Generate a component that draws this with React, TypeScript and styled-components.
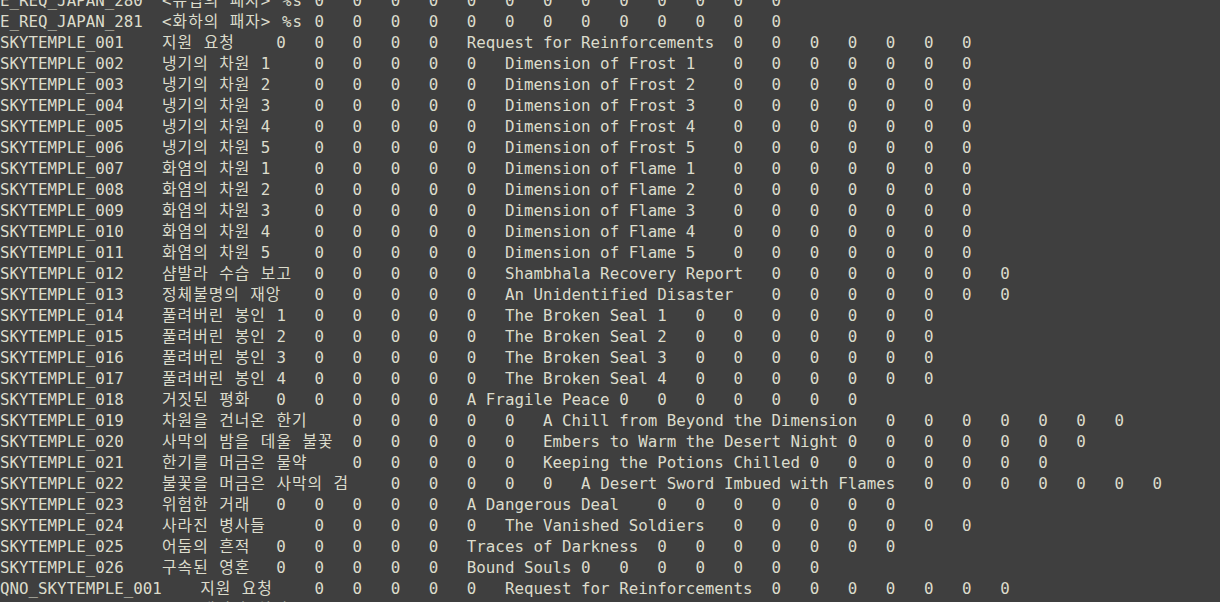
import styled, { createGlobalStyle } from "styled-components";

// tab stops of the editor: first stop at 9.7px, then every 38.1px (4 columns)
const TAB = 38.1;
const FIRST_STOP = 9.7;

const GlobalStyle = createGlobalStyle`
  html, body {
    margin: 0;
    padding: 0;
    background: #3f3f3f;
  }
`;

const Page = styled.div`
  width: 100vw;
  height: 100vh;
  overflow: hidden;
  background: #3f3f3f;
`;

const Editor = styled.div`
  margin-top: -9.75px;
  font-family: "DejaVu Sans Mono", "Noto Sans CJK KR", monospace;
  font-size: 15.82px;
  color: #dcdccc;
`;

const Line = styled.div`
  display: grid;
  grid-template-columns: ${FIRST_STOP}px repeat(32, ${TAB}px);
  height: 21px;
  line-height: 21px;
  white-space: pre;
`;

const Cell = styled.span<{ $stop: number; $ko?: boolean }>`
  grid-row: 1;
  grid-column-start: ${(p) => p.$stop + 2};
  letter-spacing: ${(p) => (p.$ko ? "1px" : "0")};
`;

type Seg = [number, string];

const zeros = (from: number, n: number): Seg[] =>
  Array.from({ length: n }, (_, i) => [from + i, "0"] as Seg);

const row = (
  id: string,
  ko: Seg,
  lead: Seg[],
  en: Seg,
  tail: Seg[]
): Seg[] => [[-1, id], ko, ...lead, en, ...tail];

const lines: Seg[][] = [
  [[-1, "E_REQ_JAPAN_280"], [4, "<유럽의 패자> %s"], ...zeros(8, 13)],
  [[-1, "E_REQ_JAPAN_281"], [4, "<화하의 패자> %s"], ...zeros(8, 13)],
  row("SKYTEMPLE_001", [4, "지원 요청"], zeros(7, 5), [12, "Request for Reinforcements"], zeros(19, 7)),
  ...[1, 2, 3, 4, 5].map((n, i) =>
    row(`SKYTEMPLE_00${i + 2}`, [4, `냉기의 차원 ${n}`], zeros(8, 5), [13, `Dimension of Frost ${n}`], zeros(19, 7))
  ),
  ...[1, 2, 3, 4, 5].map((n, i) =>
    row(
      `SKYTEMPLE_0${String(i + 7).padStart(2, "0")}`,
      [4, `화염의 차원 ${n}`],
      zeros(8, 5),
      [13, `Dimension of Flame ${n}`],
      zeros(19, 7)
    )
  ),
  row("SKYTEMPLE_012", [4, "샴발라 수습 보고"], zeros(8, 5), [13, "Shambhala Recovery Report"], zeros(20, 7)),
  row("SKYTEMPLE_013", [4, "정체불명의 재앙"], zeros(8, 5), [13, "An Unidentified Disaster"], zeros(20, 7)),
  ...[1, 2, 3, 4].map((n, i) =>
    row(`SKYTEMPLE_0${14 + i}`, [4, `풀려버린 봉인 ${n}`], zeros(8, 5), [13, `The Broken Seal ${n}`], zeros(18, 7))
  ),
  row("SKYTEMPLE_018", [4, "거짓된 평화"], zeros(7, 5), [12, "A Fragile Peace"], zeros(16, 7)),
  row("SKYTEMPLE_019", [4, "차원을 건너온 한기"], zeros(9, 5), [14, "A Chill from Beyond the Dimension"], zeros(23, 7)),
  row("SKYTEMPLE_020", [4, "사막의 밤을 데울 불꽃"], zeros(9, 5), [14, "Embers to Warm the Desert Night"], zeros(22, 7)),
  row("SKYTEMPLE_021", [4, "한기를 머금은 물약"], zeros(9, 5), [14, "Keeping the Potions Chilled"], zeros(21, 7)),
  row("SKYTEMPLE_022", [4, "불꽃을 머금은 사막의 검"], zeros(10, 5), [15, "A Desert Sword Imbued with Flames"], zeros(24, 7)),
  row("SKYTEMPLE_023", [4, "위험한 거래"], zeros(7, 5), [12, "A Dangerous Deal"], zeros(17, 7)),
  row("SKYTEMPLE_024", [4, "사라진 병사들"], zeros(8, 5), [13, "The Vanished Soldiers"], zeros(19, 7)),
  row("SKYTEMPLE_025", [4, "어둠의 흔적"], zeros(7, 5), [12, "Traces of Darkness"], zeros(17, 7)),
  row("SKYTEMPLE_026", [4, "구속된 영혼"], zeros(7, 5), [12, "Bound Souls"], zeros(15, 7)),
  row("QNO_SKYTEMPLE_001", [5, "지원 요청"], zeros(8, 5), [13, "Request for Reinforcements"], zeros(20, 7)),
  row("QNO_SKYTEMPLE_002", [5, "냉기의 차원 1"], zeros(9, 5), [14, "Dimension of Frost 1"], zeros(20, 7)),
];

const hasKorean = (s: string) => /[\uac00-\ud7a3]/.test(s);

export default function App() {
  return (
    <Page>
      <GlobalStyle />
      <Editor>
        {lines.map((segs, i) => (
          <Line key={i}>
            {segs.map(([stop, text], j) => (
              <Cell key={j} $stop={stop} $ko={hasKorean(text)}>
                {text}
              </Cell>
            ))}
          </Line>
        ))}
      </Editor>
    </Page>
  );
}
